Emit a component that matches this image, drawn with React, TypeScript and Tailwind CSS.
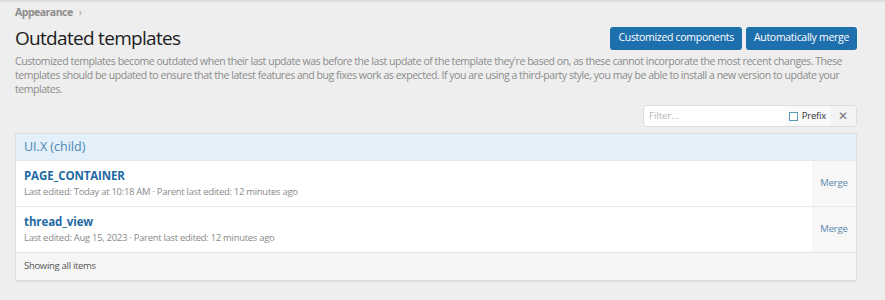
import React from "react";

const font = { fontFamily: '"Open Sans", "Segoe UI", sans-serif' };

function Row({ title, meta }: { title: string; meta: string }) {
  return (
    <div className="flex border-t border-[#e9e9e9] bg-white">
      <div className="flex-1 px-2 pb-[7px] pt-[7px]">
        <div className="text-[11.5px] font-bold leading-[16px] tracking-[-0.1px] text-[#1f6aa3]">{title}</div>
        <div className="text-[9.5px] leading-[15px] tracking-[-0.3px] text-[#8a8a8a]">{meta}</div>
      </div>
      <div className="flex w-[44px] items-center justify-center bg-[#f7f7f7] text-[9.5px] tracking-[-0.2px] text-[#5a87ad]">
        Merge
      </div>
    </div>
  );
}

export default function App() {
  return (
    <div className="h-[300px] w-[885px] overflow-hidden bg-[#eeeeee]" style={font}>
      <div className="h-[3px] bg-gradient-to-b from-[#d6d6d6] to-[#eeeeee]" />
      <div className="px-[15px]">
        <div className="mt-[2px] flex items-center gap-[6px] text-[10.5px] font-bold leading-[14px] tracking-[-0.5px] text-[#8c8c8c]">
          <span>Appearance</span>
          <span className="font-normal text-[#a0a0a0]">›</span>
        </div>
        <div className="mt-[6px] flex h-[26px] items-center justify-between">
          <h1 className="text-[19px] leading-[26px] tracking-[-0.7px] text-[#1c1c1c]">Outdated templates</h1>
          <div className="mr-[13px] flex gap-[4px]">
            <button className="h-[23px] rounded-[3px] bg-[#1e6fad] px-[8px] text-[10.5px] tracking-[-0.3px] text-white">
              Customized components
            </button>
            <button className="h-[23px] rounded-[3px] bg-[#1e6fad] px-[8px] text-[10.5px] tracking-[-0.3px] text-white">
              Automatically merge
            </button>
          </div>
        </div>
        <p className="mt-[3px] w-[845px] text-[10.5px] leading-[14px] tracking-[-0.45px] text-[#8c8c8c]">
          Customized templates become outdated when their last update was before the last update of the template they're based on, as these cannot incorporate the most recent changes. These templates should be updated to ensure that the latest features and bug fixes work as expected. If you are using a third-party style, you may be able to install a new version to update your templates.
        </p>
        <div className="mr-[13px] mt-[9px] flex justify-end">
          <div className="flex h-[22px] w-[214px] overflow-hidden rounded-[3px] border border-[#dddddd] bg-white">
            <div className="flex flex-1 items-center px-[5px] text-[9.5px] text-[#b5b5b5]">Filter...</div>
            <div className="flex items-center gap-[4px] bg-[#fafafa] px-[4px] text-[9.5px] tracking-[-0.2px] text-[#333]">
              <span className="inline-block h-[9px] w-[9px] border border-[#5a9bb8] bg-white" />
              Prefix
            </div>
            <div className="flex w-[26px] items-center justify-center bg-[#f3f3f3] text-[12px] text-[#777]">✕</div>
          </div>
        </div>
        <div className="mr-[13px] mt-[6px] overflow-hidden rounded-[2px] border border-[#dcdcdc] shadow-[0_1px_1px_rgba(0,0,0,0.08)]">
          <div className="flex h-[26px] items-center bg-[#e3f0fa] px-2 text-[12.5px] text-[#4b86b4]">UI.X (child)</div>
          <Row title="PAGE_CONTAINER" meta="Last edited: Today at 10:18 AM · Parent last edited: 12 minutes ago" />
          <Row title="thread_view" meta="Last edited: Aug 15, 2023 · Parent last edited: 12 minutes ago" />
          <div className="flex h-[28px] items-center border-t border-[#e4e4e4] bg-[#f6f6f6] px-2 text-[9.5px] tracking-[-0.3px] text-[#555]">
            Showing all items
          </div>
        </div>
      </div>
    </div>
  );
}
